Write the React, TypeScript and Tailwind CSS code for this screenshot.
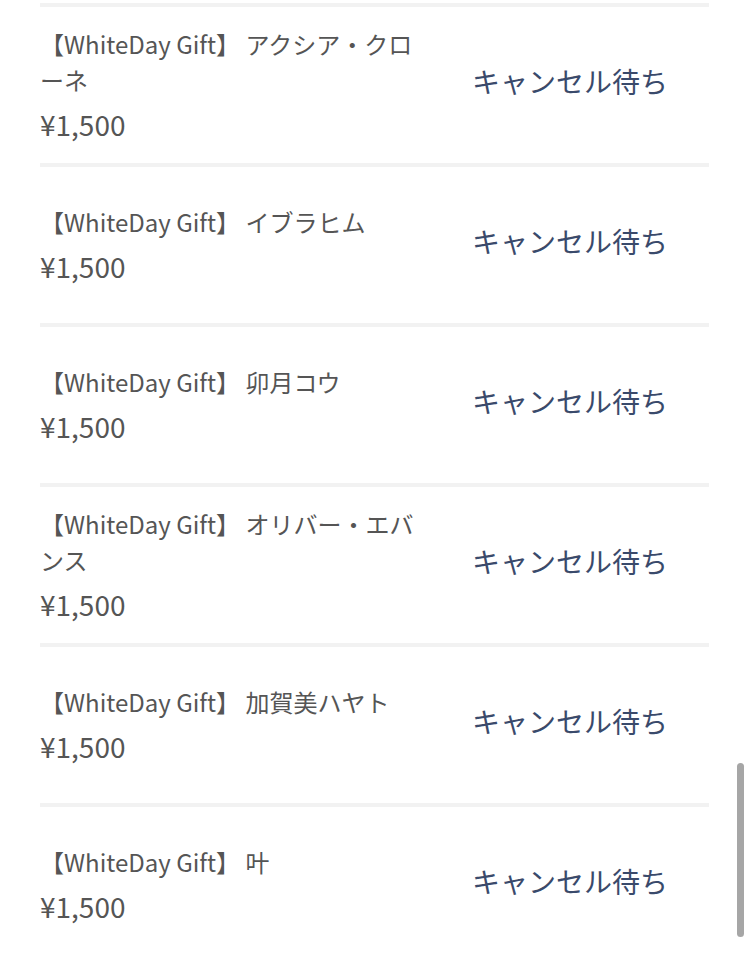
const items = [
  "アクシア・クローネ",
  "イブラヒム",
  "卯月コウ",
  "オリバー・エバンス",
  "加賀美ハヤト",
  "叶",
];

function GiftRow({ name }: { name: string }) {
  return (
    <div className="border-t-4 border-[#f2f2f2] h-[156px] box-content flex items-center">
      <div className="w-[385px] shrink-0">
        <p className="text-[24px] leading-[36px] text-[#555555]">
          【WhiteDay Gift】 {name}
        </p>
        <p className="mt-[5px] text-[28px] leading-[42px] text-[#555555]">¥1,500</p>
      </div>
      <div className="flex-1 pl-[47px] mb-[8px]">
        <span className="text-[28px] leading-[40px] text-[#3a4a6b]">キャンセル待ち</span>
      </div>
    </div>
  );
}

export default function App() {
  return (
    <div
      className="relative w-[749px] h-[960px] overflow-hidden bg-white"
      style={{ fontFamily: '"Noto Sans CJK JP", "Noto Sans", sans-serif' }}
    >
      <div className="mx-[40px] pt-[3px]">
        {items.map((name) => (
          <GiftRow key={name} name={name} />
        ))}
      </div>
      <div className="absolute right-[5px] top-[763px] w-[7px] h-[174px] rounded-full bg-[#a6a6a6]" />
    </div>
  );
}
